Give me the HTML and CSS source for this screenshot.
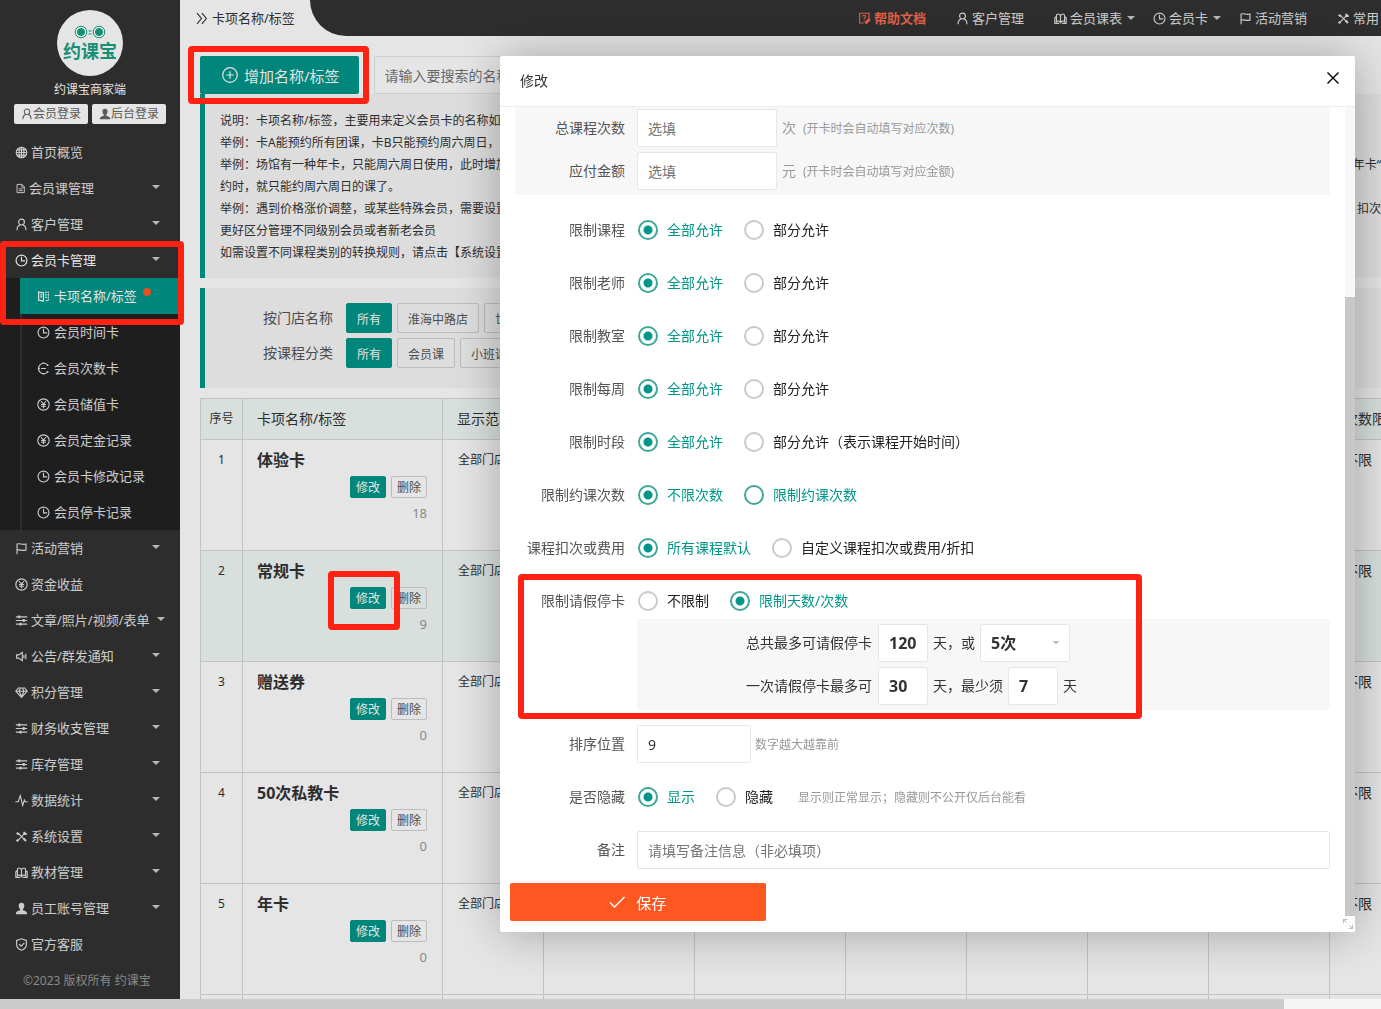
FILE: index.html
```html
<!DOCTYPE html>
<html lang="zh-CN">
<head>
  <meta charset="UTF-8" />
  <title>卡项名称/标签 - 约课宝商家端</title>
  <meta name="viewport" content="width=device-width, initial-scale=1" />
  <link rel="stylesheet" href="styles.css">
</head>
<body>

<svg class="sprite" aria-hidden="true">
  <symbol id="i-user" viewBox="0 0 16 16"><circle cx="8" cy="5" r="3.6"/><path d="M2.5 15c0-4 2-6 4-6.5M13.5 15c0-4-2-6-4-6.5"/></symbol>
  <symbol id="i-userfill" viewBox="0 0 16 16"><path fill="currentColor" stroke="none" d="M8 1c2.300 0 3.500 1.600 3.500 3.700S10.300 8.500 9.700 9.100v1.200c3.300 1 5.300 1.500 5.300 4.700H1c0-3.200 2-3.700 5.300-4.700V9.100C5.700 8.500 4.500 6.800 4.500 4.700S5.700 1 8 1z"/></symbol>
  <symbol id="i-globe" viewBox="0 0 16 16"><circle cx="8" cy="8" r="6.500"/><ellipse cx="8" cy="8" rx="3" ry="6.500"/><path d="M8 1.500v13M1.500 8h13M2.500 4.800h11M2.500 11.200h11"/></symbol>
  <symbol id="i-doc" viewBox="0 0 16 16"><path d="M3 2h7l3.500 3.500V14H3zM10 2v4h3.500M5.500 8.500h5.500M5.500 11.200h5.500"/></symbol>
  <symbol id="i-clock" viewBox="0 0 16 16"><circle cx="8" cy="8" r="6.700"/><path d="M8 3.500V8.500h4.500"/></symbol>
  <symbol id="i-tag" viewBox="0 0 16 16"><path d="M2 2.500l6 1v10l-6-1zM4 6h2.500M4 8.500h2.500"/><path stroke-dasharray="2 1" d="M10 3h4v10h-4M10 6h3M10 9h3"/></symbol>
  <symbol id="i-count" viewBox="0 0 16 16"><path d="M13.500 4A6.500 6.500 0 1 0 13.500 12M5 8h6"/><path stroke-width="2" d="M13 3v2M13 11v2M1 8h2.500M7 1.500h2M7 14.500h2"/></symbol>
  <symbol id="i-yen" viewBox="0 0 16 16"><circle cx="8" cy="8" r="7"/><path d="M5 4l3 3.500L11 4M8 7.500V12.500M5 8h6M5 10.200h6"/></symbol>
  <symbol id="i-flag" viewBox="0 0 16 16"><path d="M2.500 15V2.500c4-1.500 6 1.500 11 0v7.500c-5 1.500-7-1.500-11 0"/></symbol>
  <symbol id="i-sliders" viewBox="0 0 16 16"><path d="M1 3.500h14M1 8h14M1 12.500h14"/><path stroke-width="3.600" d="M4 3.500h2.500M9.500 8H12M5.500 12.500H8"/></symbol>
  <symbol id="i-sound" viewBox="0 0 16 16"><path d="M2 6h2.500L9 3v10L4.500 10H2zM11 6v4M13.300 4.500v7"/></symbol>
  <symbol id="i-gem" viewBox="0 0 16 16"><path d="M4 2.500h8L15 6.500 8 14 1 6.500zM1 6.500h14M5 6.500L8 13l3-6.500M5 6.500L6.500 3M11 6.500L9.500 3"/></symbol>
  <symbol id="i-pulse" viewBox="0 0 16 16"><path d="M0.500 9.500H4L6.500 2 9.500 14 11.500 7.500 12.500 9.500h3"/></symbol>
  <symbol id="i-tools" viewBox="0 0 16 16"><path d="M3 13.500L12.500 3.500M4.500 4.500l8.500 8.500"/><path stroke-width="2.600" d="M2 3.500l3 2M10.500 10.500l3 3M11.500 2v3h3M2 12l2 2"/></symbol>
  <symbol id="i-book" viewBox="0 0 16 16"><path d="M8 13V5.500C7.500 1.500 3 1.500 3 5v7c1.500-1.500 4-1 5 1 1-2 3.500-2.500 5-1V5c0-3.500-4.500-3.500-5 .5M3 5.500L1 7v7h5.500M13 5.500L15 7v7H9.500"/></symbol>
  <symbol id="i-shield" viewBox="0 0 16 16"><path d="M8 1l6 2v5c0 4-3 6-6 7-3-1-6-3-6-7V3zM5 7.500l2.500 2.500L11.500 6"/></symbol>
  <symbol id="i-help" viewBox="0 0 16 16"><path d="M2 1.500h11.500v7M2 1.500v12h5M5.500 5.500c0-2 4-2 4 0 0 1.500-2 1.300-2 3M7.500 10v1.200"/><path stroke-width="3.500" d="M14.500 8.500L9 14"/></symbol>
  <symbol id="i-angles" viewBox="0 0 16 16"><path d="M2.500 1.500L8 8l-5.500 6.500M8.500 1.500L14 8l-5.500 6.500"/></symbol>
  <symbol id="i-plus" viewBox="0 0 16 16"><circle cx="8" cy="8" r="7.300"/><path d="M8 4.200v7.600M4.200 8h7.600"/></symbol>
  <symbol id="i-check" viewBox="0 0 16 16"><path d="M1 8.500l4.500 4.500L15.500 3"/></symbol>
  <symbol id="i-close" viewBox="0 0 16 16"><path d="M2.500 2.500l11 11M13.500 2.500l-11 11"/></symbol>
  <symbol id="i-resize" viewBox="0 0 16 16"><path d="M2 7V2h5M2 2l4 4M14 9v5H9M14 14l-4-4"/></symbol>
</svg>

<div class="app">
  <aside class="sidebar">
    <div class="brand">
      <div class="logo">
        <svg class="logo-eyes" viewBox="0 0 32 14"><circle cx="7" cy="7" r="5.800"/><circle cx="25" cy="7" r="5.800"/><circle class="dot" cx="7" cy="7" r="3.500"/><circle class="dot" cx="25" cy="7" r="3.500"/><path d="M14.500 6h3M14.500 9h3"/></svg>
        <span>约课宝</span>
      </div>
      <div class="brand-name">约课宝商家端</div>
      <div class="brand-links">
        <a href="#"><svg class="icon"><use href="#i-user"/></svg>会员登录</a>
        <a href="#"><svg class="icon"><use href="#i-userfill"/></svg>后台登录</a>
      </div>
    </div>

    <nav class="menu">
      <a href="#"><svg class="icon"><use href="#i-globe"/></svg>首页概览</a>
      <a href="#" class="more"><svg class="icon small"><use href="#i-doc"/></svg>会员课管理</a>
      <a href="#" class="more"><svg class="icon"><use href="#i-user"/></svg>客户管理</a>
      <a href="#" class="more open"><svg class="icon"><use href="#i-clock"/></svg>会员卡管理</a>
      <div class="submenu">
        <a href="#" class="active"><svg class="icon"><use href="#i-tag"/></svg>卡项名称/标签<i class="badge"></i></a>
        <a href="#"><svg class="icon"><use href="#i-clock"/></svg>会员时间卡</a>
        <a href="#"><svg class="icon"><use href="#i-count"/></svg>会员次数卡</a>
        <a href="#"><svg class="icon"><use href="#i-yen"/></svg>会员储值卡</a>
        <a href="#"><svg class="icon"><use href="#i-yen"/></svg>会员定金记录</a>
        <a href="#"><svg class="icon"><use href="#i-clock"/></svg>会员卡修改记录</a>
        <a href="#"><svg class="icon"><use href="#i-clock"/></svg>会员停卡记录</a>
      </div>
      <a href="#" class="more"><svg class="icon"><use href="#i-flag"/></svg>活动营销</a>
      <a href="#"><svg class="icon"><use href="#i-yen"/></svg>资金收益</a>
      <a href="#" class="more long"><svg class="icon"><use href="#i-sliders"/></svg>文章/照片/视频/表单</a>
      <a href="#" class="more"><svg class="icon"><use href="#i-sound"/></svg>公告/群发通知</a>
      <a href="#" class="more"><svg class="icon"><use href="#i-gem"/></svg>积分管理</a>
      <a href="#" class="more"><svg class="icon"><use href="#i-sliders"/></svg>财务收支管理</a>
      <a href="#" class="more"><svg class="icon"><use href="#i-sliders"/></svg>库存管理</a>
      <a href="#" class="more"><svg class="icon"><use href="#i-pulse"/></svg>数据统计</a>
      <a href="#" class="more"><svg class="icon"><use href="#i-tools"/></svg>系统设置</a>
      <a href="#" class="more"><svg class="icon"><use href="#i-book"/></svg>教材管理</a>
      <a href="#" class="more"><svg class="icon"><use href="#i-userfill"/></svg>员工账号管理</a>
      <a href="#"><svg class="icon"><use href="#i-shield"/></svg>官方客服</a>
    </nav>
    <div class="copyright">©2023 版权所有 约课宝</div>
  </aside>

  <div class="page">
    <header class="header">
      <div class="crumb"><svg class="icon"><use href="#i-angles"/></svg>卡项名称/标签</div>
      <nav class="topnav">
        <a href="#" class="help"><svg class="icon"><use href="#i-help"/></svg>帮助文档</a>
        <a href="#"><svg class="icon"><use href="#i-user"/></svg>客户管理</a>
        <a href="#" class="drop"><svg class="icon"><use href="#i-book"/></svg>会员课表</a>
        <a href="#" class="drop"><svg class="icon"><use href="#i-clock"/></svg>会员卡</a>
        <a href="#"><svg class="icon"><use href="#i-flag"/></svg>活动营销</a>
        <a href="#"><svg class="icon"><use href="#i-tools"/></svg>常用</a>
      </nav>
    </header>

    <main class="content">
      <div class="toolbar">
        <button type="button" class="add-btn"><svg class="icon"><use href="#i-plus"/></svg>增加名称/标签</button>
        <input type="text" class="search" placeholder="请输入要搜索的名称" aria-label="搜索名称" />
      </div>

      <div class="quote notice">
        <p>说明：卡项名称/标签，主要用来定义会员卡的名称如</p>
        <p>举例：卡A能预约所有团课，卡B只能预约周六周日，</p>
        <p><span>举例：场馆有一种年卡，只能周六周日使用，此时增加</span><span class="tail">年卡“</span></p>
        <p>约时，就只能约周六周日的课了。</p>
        <p><span>举例：遇到价格涨价调整，或某些特殊会员，需要设置</span><span class="tail">扣次</span></p>
        <p>更好区分管理不同级别会员或者新老会员</p>
        <p>如需设置不同课程类别的转换规则，请点击【系统设置】</p>
      </div>

      <div class="quote filters">
        <div class="filter"><span>按门店名称</span><button type="button" class="on">所有</button><button type="button">淮海中路店</button><button type="button">世纪店</button></div>
        <div class="filter"><span>按课程分类</span><button type="button" class="on">所有</button><button type="button">会员课</button><button type="button">小班课</button></div>
      </div>

      <table class="cards">
        <colgroup>
          <col class="c-no"><col class="c-name"><col class="c-range"><col class="c-wide"><col class="c-wide"><col class="c-mid"><col class="c-mid"><col class="c-mid"><col class="c-mid"><col>
        </colgroup>
        <thead>
          <tr><th class="no">序号</th><th>卡项名称/标签</th><th>显示范围</th><th></th><th></th><th></th><th></th><th></th><th></th><th>次数限制</th></tr>
        </thead>
        <tbody>
          <tr><td class="no">1</td><td><b>体验卡</b><div class="ops"><button type="button" class="on">修改</button><button type="button">删除</button></div><div class="num">18</div></td><td class="range">全部门店</td><td></td><td></td><td></td><td></td><td></td><td></td><td>不限</td></tr>
          <tr class="hover"><td class="no">2</td><td><b>常规卡</b><div class="ops"><button type="button" class="on">修改</button><button type="button">删除</button></div><div class="num">9</div></td><td class="range">全部门店</td><td></td><td></td><td></td><td></td><td></td><td></td><td>不限</td></tr>
          <tr><td class="no">3</td><td><b>赠送券</b><div class="ops"><button type="button" class="on">修改</button><button type="button">删除</button></div><div class="num">0</div></td><td class="range">全部门店</td><td></td><td></td><td></td><td></td><td></td><td></td><td>不限</td></tr>
          <tr><td class="no">4</td><td><b>50次私教卡</b><div class="ops"><button type="button" class="on">修改</button><button type="button">删除</button></div><div class="num">0</div></td><td class="range">全部门店</td><td></td><td></td><td></td><td></td><td></td><td></td><td>不限</td></tr>
          <tr><td class="no">5</td><td><b>年卡</b><div class="ops"><button type="button" class="on">修改</button><button type="button">删除</button></div><div class="num">0</div></td><td class="range">全部门店</td><td></td><td></td><td></td><td></td><td></td><td></td><td>不限</td></tr>
          <tr><td class="no"></td><td></td><td></td><td></td><td></td><td></td><td></td><td></td><td></td><td></td></tr>
        </tbody>
      </table>
    </main>
  </div>
</div>
<div class="hscroll"><div class="hscroll-thumb"></div></div>

<div class="shade"></div>

<div class="modal" role="dialog" aria-labelledby="modalTitle">
  <div class="modal-title">
    <span id="modalTitle">修改</span>
    <button type="button" class="close" aria-label="关闭"><svg class="icon"><use href="#i-close"/></svg></button>
  </div>
  <div class="modal-main">
    <form class="form">
      <div class="rows">
        <div class="gray">
          <div class="row"><label class="name" for="times">总课程次数</label><input type="text" id="times" class="text w-md" placeholder="选填" /><span class="unit">次</span><span class="tip">(开卡时会自动填写对应次数)</span></div>
          <div class="row"><label class="name" for="amount">应付金额</label><input type="text" id="amount" class="text w-md" placeholder="选填" /><span class="unit">元</span><span class="tip">(开卡时会自动填写对应金额)</span></div>
        </div>

        <div class="row"><span class="name">限制课程</span><label class="radio"><input type="radio" name="course" checked />全部允许</label><label class="radio"><input type="radio" name="course" />部分允许</label></div>
        <div class="row"><span class="name">限制老师</span><label class="radio"><input type="radio" name="teacher" checked />全部允许</label><label class="radio"><input type="radio" name="teacher" />部分允许</label></div>
        <div class="row"><span class="name">限制教室</span><label class="radio"><input type="radio" name="room" checked />全部允许</label><label class="radio"><input type="radio" name="room" />部分允许</label></div>
        <div class="row"><span class="name">限制每周</span><label class="radio"><input type="radio" name="week" checked />全部允许</label><label class="radio"><input type="radio" name="week" />部分允许</label></div>
        <div class="row"><span class="name">限制时段</span><label class="radio"><input type="radio" name="period" checked />全部允许</label><label class="radio"><input type="radio" name="period" />部分允许（表示课程开始时间）</label></div>
        <div class="row"><span class="name">限制约课次数</span><label class="radio"><input type="radio" name="book" checked />不限次数</label><label class="radio focus"><input type="radio" name="book" />限制约课次数</label></div>
        <div class="row"><span class="name">课程扣次或费用</span><label class="radio"><input type="radio" name="fee" checked />所有课程默认</label><label class="radio"><input type="radio" name="fee" />自定义课程扣次或费用/折扣</label></div>
        <div class="row leave"><span class="name">限制请假停卡</span><label class="radio"><input type="radio" name="leave" />不限制</label><label class="radio"><input type="radio" name="leave" checked />限制天数/次数</label></div>
        <div class="leave-box">
          <div class="leave-line"><label for="maxDays">总共最多可请假停卡</label><input type="text" id="maxDays" class="text w-sm" value="120" /><label for="maxTimes">天，或</label><select id="maxTimes" class="select"><option>5次</option></select></div>
          <div class="leave-line"><label for="onceMax">一次请假停卡最多可</label><input type="text" id="onceMax" class="text w-sm" value="30" /><label for="onceMin">天，最少须</label><input type="text" id="onceMin" class="text w-sm" value="7" /><span>天</span></div>
        </div>

        <div class="row"><label class="name" for="sort">排序位置</label><input type="text" id="sort" class="text w-sort" value="9" /><span class="tip near">数字越大越靠前</span></div>
        <div class="row"><span class="name">是否隐藏</span><label class="radio"><input type="radio" name="hide" checked />显示</label><label class="radio"><input type="radio" name="hide" />隐藏</label><span class="tip near">显示则正常显示；隐藏则不公开仅后台能看</span></div>
        <div class="row"><label class="name" for="remark">备注</label><input type="text" id="remark" class="text w-full" placeholder="请填写备注信息（非必填项）" /></div>
      </div>
      <div class="form-foot">
        <button type="submit" class="save"><svg class="icon"><use href="#i-check"/></svg>保存</button>
      </div>
    </form>
    <div class="vscroll">
      <div class="vscroll-thumb"></div>
      <svg class="icon resize"><use href="#i-resize"/></svg>
    </div>
  </div>
</div>

<!-- 操作步骤标注 -->
<div class="mark mark-add"></div>
<div class="mark mark-menu"></div>
<div class="mark mark-edit"></div>
<div class="mark mark-leave"></div>

</body>
</html>
```
FILE: styles.css
```css
* {
  box-sizing: border-box;
}
body {
  margin: 0;
  height: 100vh;
  display: flex;
  flex-direction: column;
  overflow: hidden;
  font-family: "Noto Sans", "Noto Sans CJK SC", sans-serif;
  font-size: 14px;
  line-height: 22px;
  color: #333;
  background: #fff;
}
a {
  color: inherit;
  text-decoration: none;
}
p {
  margin: 0;
}
button, input, select {
  font-family: inherit;
}
button {
  cursor: pointer;
}
.sprite {
  position: absolute;
  width: 0;
  height: 0;
}
.icon {
  width: 13px;
  height: 13px;
  flex: none;
  fill: none;
  stroke: currentColor;
  stroke-width: 1.4;
}
.app {
  flex: 1;
  min-height: 0;
  display: flex;
  overflow: hidden;
}

/* 左侧菜单 */
.sidebar {
  width: 180px;
  flex: none;
  background: #333;
  color: #e2e2e2;
  font-size: 13px;
}
.brand {
  height: 134px;
  padding-top: 10px;
  display: flex;
  flex-direction: column;
  align-items: center;
}
.logo {
  width: 66px;
  height: 66px;
  border-radius: 50%;
  background: #fff;
  color: #18a184;
  font-size: 18px;
  font-weight: 700;
  line-height: 24px;
  display: flex;
  flex-direction: column;
  align-items: center;
  padding-top: 15px;
}
.logo-eyes {
  width: 32px;
  height: 14px;
  fill: none;
  stroke: currentColor;
}
.logo-eyes .dot {
  fill: currentColor;
}
.brand-name {
  color: #fff;
  font-size: 12px;
  line-height: 28px;
}
.brand-links {
  display: flex;
  gap: 4px;
}
.brand-links a {
  width: 74px;
  height: 20px;
  display: flex;
  align-items: center;
  justify-content: center;
  background: #fff;
  border-radius: 2px;
  color: #666;
  font-size: 12px;
}
.brand-links .icon {
  width: 12px;
  height: 12px;
}
.menu a {
  position: relative;
  height: 36px;
  padding-left: 15px;
  display: flex;
  align-items: center;
  gap: 3px;
}
.menu .small {
  width: 11px;
  height: 11px;
}
.menu .more::after {
  content: "";
  position: absolute;
  right: 20px;
  top: 15px;
  border: 4px solid transparent;
  border-top-color: #ccc;
}
.menu .long::after {
  right: 15px;
}
.menu .open {
  color: #fff;
}
.submenu {
  background: #222;
  padding-left: 20px;
}
.submenu a {
  border-left: 2px solid #333;
}
.submenu .icon {
  margin-right: 1px;
}
.menu .active {
  background: #009688;
  border-color: #009688;
  color: #fff;
}
.badge {
  width: 8px;
  height: 8px;
  border-radius: 50%;
  background: #ff5722;
  margin: 0 0 8px 3px;
}
.copyright {
  color: #999;
  font-size: 12px;
  line-height: 38px;
  padding-left: 23px;
}

/* 顶部 */
.page {
  flex: 1;
  min-width: 0;
  overflow: hidden;
}
.header {
  height: 36px;
  display: flex;
  font-size: 13px;
}
.crumb {
  width: 130px;
  flex: none;
  display: flex;
  align-items: center;
  gap: 4px;
  padding-left: 15px;
}
.topnav {
  flex: 1;
  min-width: 0;
  overflow: hidden;
  display: flex;
  align-items: center;
  justify-content: flex-end;
  gap: 30px;
  padding-right: 2px;
  background: #333;
  color: #e2e2e2;
  border-bottom-left-radius: 36px;
}
.topnav a {
  flex: none;
  display: flex;
  align-items: center;
  gap: 3px;
}
.topnav .help {
  color: #f56b51;
  font-weight: 700;
}
.topnav .drop::after {
  content: "";
  margin: 4px -12px 0 2px;
  border: 4px solid transparent;
  border-top-color: #ccc;
}

/* 内容 */
.content {
  padding: 20px 0 0 20px;
}
.toolbar {
  display: flex;
  gap: 15px;
}
.add-btn {
  height: 38px;
  padding: 0 19px 0 22px;
  display: flex;
  align-items: center;
  gap: 6px;
  border: 0;
  border-radius: 2px;
  background: #009688;
  color: #fff;
  font-size: 15px;
}
.add-btn .icon {
  width: 16px;
  height: 16px;
  stroke-width: 1.2;
}
.search {
  width: 260px;
  height: 38px;
  padding: 0 10px;
  border: 1px solid #e6e6e6;
  border-radius: 2px;
  font-size: 14px;
}
.search::placeholder, .text::placeholder {
  color: #757575;
}
.quote {
  border-left: 5px solid #009688;
  background: #f7f7f7;
  padding: 15px;
  margin-bottom: 10px;
}
.notice {
  padding: 16px 0 14px 15px;
  font-size: 12px;
}
.notice p {
  display: flex;
  justify-content: space-between;
  white-space: nowrap;
}
.tail {
  flex: none;
}
.filters {
  padding-bottom: 20px;
  display: flex;
  flex-direction: column;
  gap: 5px;
}
.filter {
  display: flex;
  gap: 5px;
}
.filter span {
  width: 113px;
  margin-right: 8px;
  line-height: 30px;
  text-align: right;
  color: #555;
}
.filter button, .ops button {
  border: 1px solid #d2d2d2;
  border-radius: 2px;
  background: none;
  color: #555;
  font-size: 12px;
}
.filter button {
  height: 30px;
  padding: 1px 10px 0;
}
.filter .on, .ops .on {
  background: #009688;
  border-color: #009688;
  color: #fff;
}
.cards {
  width: 1280px;
  table-layout: fixed;
  border-collapse: collapse;
}
.c-no { width: 42px; }
.c-name { width: 200px; }
.c-range { width: 101px; }
.c-wide { width: 151px; }
.c-mid { width: 121px; }
.cards th, .cards td {
  border: 1px solid #d5dad9;
  padding: 0 15px 0 14px;
  text-align: left;
  font-weight: 400;
}
.cards th {
  height: 41px;
  background: #f1f9f6;
}
.cards td {
  height: 111px;
  padding-top: 9px;
  vertical-align: top;
}
.cards .hover {
  background: #f1f9f6;
}
.cards .no {
  padding-left: 0;
  padding-right: 0;
  text-align: center;
  font-size: 12px;
}
.cards td.range {
  padding-left: 15px;
  font-size: 12px;
}
.cards b {
  display: block;
  font-size: 16px;
}
.ops {
  display: flex;
  justify-content: flex-end;
  gap: 5px;
  margin-top: 5px;
}
.ops button {
  height: 22px;
  padding: 0 5px;
}
.num {
  text-align: right;
  font-size: 13px;
  line-height: 30px;
  color: #999;
}
.hscroll {
  height: 10px;
  flex: none;
  position: relative;
  z-index: 2;
  background: #f5f5f5;
}
.hscroll-thumb {
  width: 93%;
  height: 10px;
  background: #cbcbcb;
}

/* 弹窗 */
.shade {
  position: fixed;
  inset: 0;
  background: rgba(0, 0, 0, 0.1);
}
.modal {
  position: fixed;
  z-index: 1;
  top: 56px;
  right: 26px;
  bottom: 77px;
  left: 500px;
  display: flex;
  flex-direction: column;
  background: #fff;
  border-radius: 2px;
  box-shadow: 1px 1px 50px rgba(0, 0, 0, 0.3);
}
.modal-title {
  height: 51px;
  flex: none;
  padding: 0 14px 0 20px;
  display: flex;
  align-items: center;
  justify-content: space-between;
  border-bottom: 1px solid #eee;
}
.close {
  border: 0;
  padding: 0;
  width: 16px;
  height: 16px;
  margin-bottom: 6px;
  background: none;
}
.close .icon {
  width: 16px;
  height: 16px;
}
.modal-main {
  flex: 1;
  min-height: 0;
  display: flex;
}
.form {
  flex: 1;
  min-width: 0;
}
.rows {
  padding: 0 15px;
}
.gray {
  background: #f7f7f7;
  padding: 2px 0 5px;
  margin-bottom: 16px;
}
.row {
  height: 38px;
  display: flex;
  align-items: center;
  margin-bottom: 15px;
}
.gray .row {
  margin-bottom: 5px;
}
.gray .row:last-child, .rows .leave, .rows > .row:last-child {
  margin-bottom: 0;
}
.name {
  width: 110px;
  flex: none;
  margin-right: 12px;
  text-align: right;
  color: #555;
}
.text, .select {
  height: 38px;
  padding: 0 10px;
  border: 1px solid #e6e6e6;
  border-radius: 2px;
  background: #fff;
  color: #333;
  font-size: 14px;
}
.w-md { width: 140px; }
.w-sort { width: 114px; }
.w-sm { width: 50px; }
.w-full { flex: 1; }
.unit {
  margin: 0 7px 0 5px;
  color: #999;
}
.tip {
  color: #999;
  font-size: 12px;
  line-height: 20px;
  padding-top: 2px;
}
.near {
  margin-left: 4px;
}
.radio {
  display: flex;
  align-items: center;
  gap: 9px;
  margin-right: 21px;
  color: #222;
}
.radio:has(:checked), .focus {
  color: #009688;
}
.radio input {
  appearance: none;
  width: 20px;
  height: 20px;
  margin: 0 0 0 1px;
  border: 2px solid #c9c9c9;
  border-radius: 50%;
}
.radio + .radio input {
  margin-left: 0;
}
.radio input:checked, .focus input {
  border-color: #3fa699;
}
.radio input:checked {
  background: radial-gradient(circle, #009688 4px, transparent 5px);
}
.leave-box {
  margin: -1px 0 15px 122px;
  padding: 5px 0 5px 109px;
  background: #f7f7f7;
  border-radius: 2px;
  display: flex;
  flex-direction: column;
  gap: 5px;
}
.leave-line {
  display: flex;
  align-items: center;
  gap: 5px;
}
.leave-line label:first-child {
  margin-right: 1px;
}
.leave-line .text, .select {
  font-size: 16px;
  font-weight: 700;
}
/* 下拉箭头：灰块被两个三角遮成倒三角 */
.select {
  appearance: none;
  width: 90px;
  background:
    linear-gradient(to bottom left, transparent 50%, #fff 50%) right 13px center / 4px 4px no-repeat,
    linear-gradient(to bottom right, transparent 50%, #fff 50%) right 9px center / 4px 4px no-repeat,
    linear-gradient(#c2c2c2, #c2c2c2) right 9px center / 8px 4px no-repeat,
    #fff;
}
.form-foot {
  padding: 14px 10px 0;
}
.save {
  width: 31%;
  height: 38px;
  display: flex;
  align-items: center;
  justify-content: center;
  gap: 11px;
  border: 0;
  border-radius: 2px;
  background: #ff5722;
  color: #fff;
  font-size: 15px;
}
.save .icon {
  width: 16px;
  height: 16px;
}
.vscroll {
  width: 10px;
  flex: none;
  display: flex;
  flex-direction: column;
  justify-content: flex-end;
  background: linear-gradient(#f8f8f8 90%, #fff 0);
}
.vscroll-thumb {
  height: 75%;
  background: #c8c8c8;
}
.resize {
  width: 12px;
  height: 12px;
  margin: 2px 0 2px -3px;
  color: #bbb;
}

/* 红框标注 */
.mark {
  position: absolute;
  z-index: 3;
  border: 6px solid #ff2213;
  border-radius: 4px;
  pointer-events: none;
}
.mark-add {
  left: 188px;
  top: 46px;
  width: 181px;
  height: 58px;
}
.mark-menu {
  left: 0;
  top: 241px;
  width: 184px;
  height: 84px;
}
.mark-edit {
  left: 328px;
  top: 571px;
  width: 72px;
  height: 59px;
}
.mark-leave {
  left: 518px;
  top: 574px;
  width: 624px;
  height: 145px;
}
```
